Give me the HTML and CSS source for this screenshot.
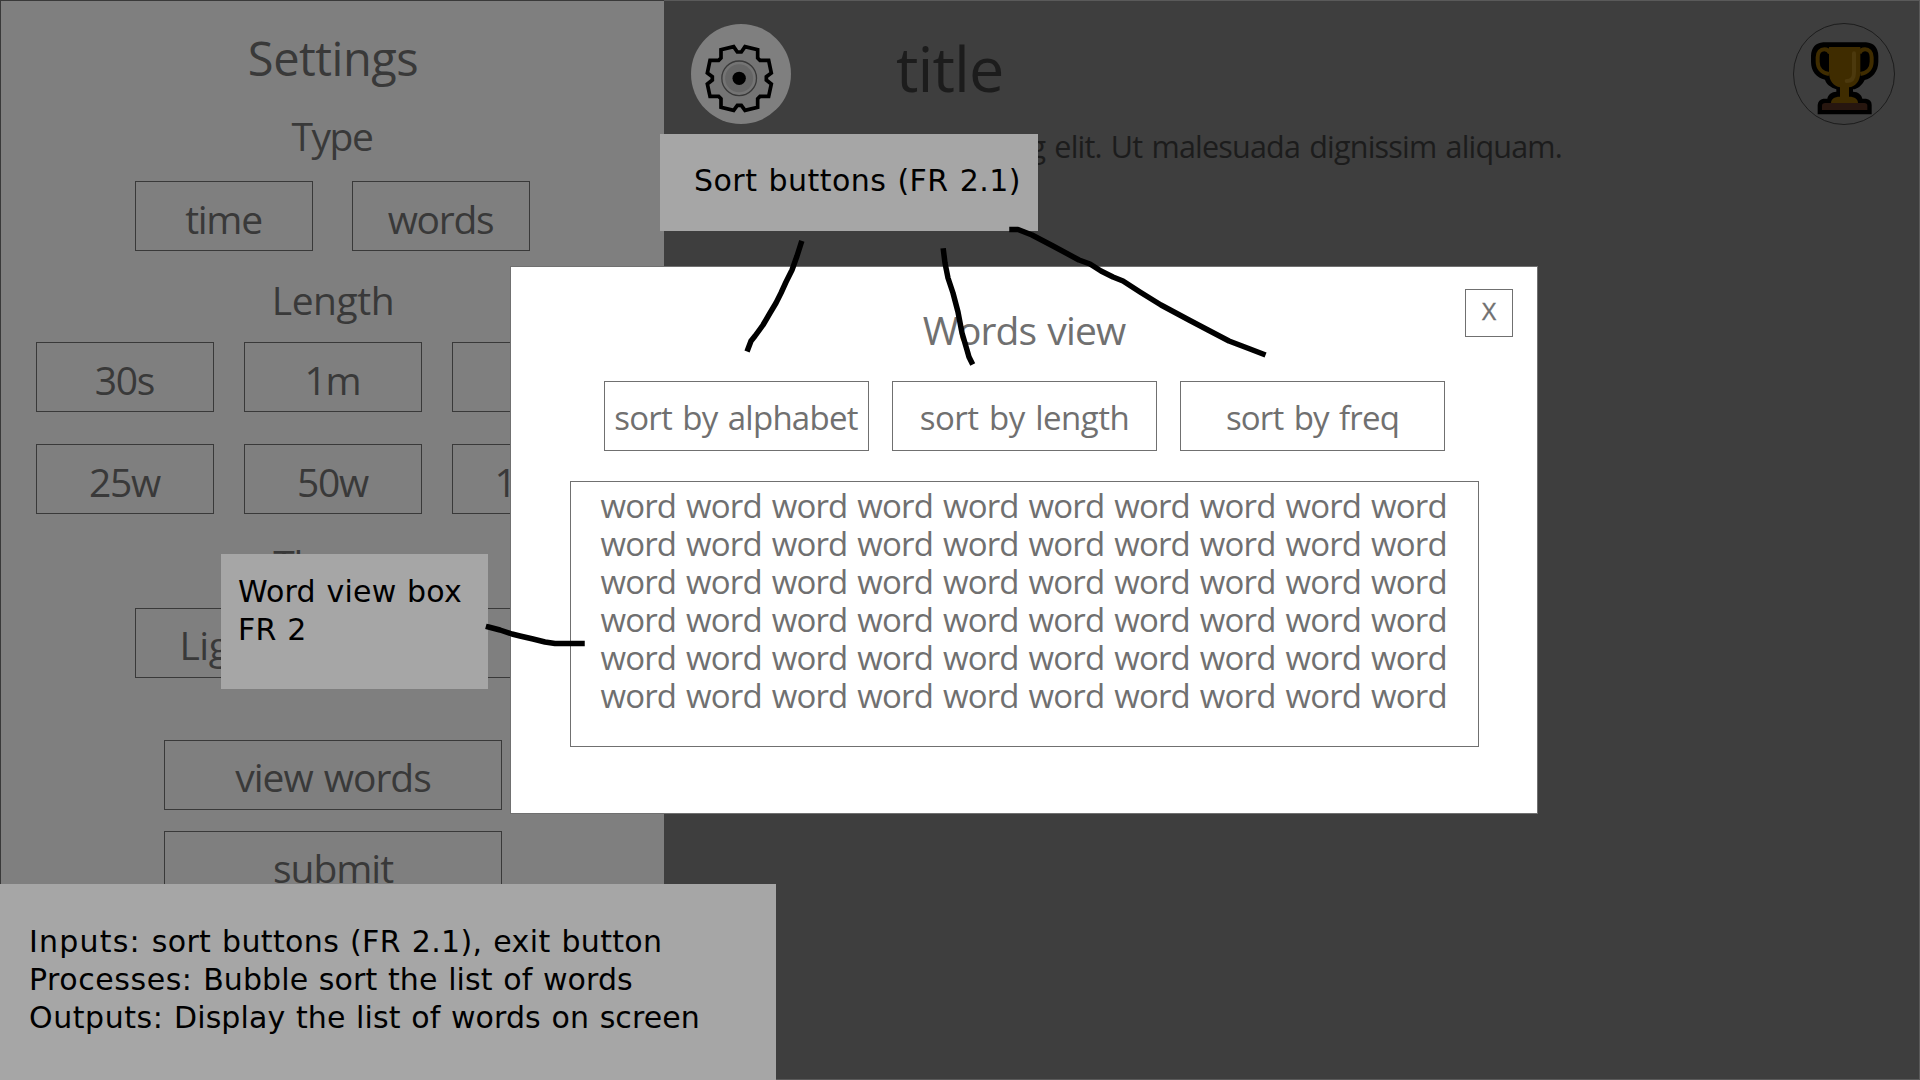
FILE: index.html
```html
<!DOCTYPE html>
<html lang="en">
<head>
<meta charset="utf-8">
<title>Words view</title>
<link rel="stylesheet" href="styles.css">
</head>
<body>
<div class="screen">
  <aside class="sidebar">
    <h1 class="sidebar-title">Settings</h1>
    <h2 class="group-title type-title">Type</h2>
    <div class="row type-row">
      <button class="btn tight">time</button>
      <button class="btn tight">words</button>
    </div>
    <h2 class="group-title length-title">Length</h2>
    <div class="row time-row">
      <button class="btn tight">30s</button>
      <button class="btn tight">1m</button>
      <button class="btn tight">2m</button>
    </div>
    <div class="row word-row">
      <button class="btn tight">25w</button>
      <button class="btn tight">50w</button>
      <button class="btn tight">100w</button>
    </div>
    <h2 class="group-title theme-title">Theme</h2>
    <div class="row theme-row">
      <button class="btn light">Light</button>
      <button class="btn tight">Dark</button>
    </div>
    <button class="btn wide view-words">view words</button>
    <button class="btn wide submit">submit</button>
  </aside>

  <main class="main">
    <header class="header">
      <div class="gear-button">
        <svg viewBox="33 30 300 300" width="100" height="100">
          <path class="gear-body" d="M172 114H184L195 98 233 107V132L240 139H266L274 177 259 188V198L274 210 266 247H240L233 254V280L195 289 184 274H172L161 289 123 280V254L116 247H90L82 210 97 198V188L82 177 90 139H116L123 132V107L161 98Z"/>
          <circle class="gear-ring" cx="177.500" cy="193" r="52"/>
          <circle class="gear-hub" cx="177.500" cy="193" r="42"/>
          <circle class="gear-dot" cx="177.500" cy="193" r="20"/>
        </svg>
      </div>
      <div class="title">title</div>
      <div class="trophy-button">
        <svg viewBox="99 69 306 306" width="102" height="102">
          <circle class="trophy-ring" cx="252" cy="222" r="151.500"/>
          <path d="M190 127H318Q353 130 355 167V185C355 215 335 236 314 240C306 256 292 268 279 268V275C295 275 305 285 307 296H318Q335 298 335 315V343H173V315Q175 298 190 296H202C204 284 215 275 229 275V268C212 262 198 252 195 239C170 233 153 215 153 185V167Q155 130 190 127Z"/>
          <path class="handle" d="M207 222C184 218 173 203 173 185V172C173 156 182 148 193 148C203 148 208 155 210 160M301 222C324 218 335 203 335 185V172C335 156 326 148 315 148C305 148 300 155 298 160"/>
          <path class="gold" d="M207 141H301V215C301 245 285 260 267 262V290C285 290 294 298 294 309H213C213 298 222 290 240 290V262C222 258 207 245 207 215Z"/>
          <path class="shine" d="M282 160V218Q282 243 260 243"/>
          <path class="plinth" d="M186 330V317Q186 309 196 309H313Q322 309 322 317V330Z"/>
        </svg>
      </div>
    </header>
    <p class="passage">consectetur adipiscing elit. Ut malesuada dignissim aliquam.</p>
  </main>

  <section class="modal">
    <button class="close">X</button>
    <h2 class="modal-title">Words view</h2>
    <div class="sort-row">
      <button class="sort alphabet">sort by alphabet</button>
      <button class="sort length">sort by length</button>
      <button class="sort freq">sort by freq</button>
    </div>
    <div class="word-box">word word word word word word word word word word
word word word word word word word word word word
word word word word word word word word word word
word word word word word word word word word word
word word word word word word word word word word
word word word word word word word word word word</div>
  </section>

  <div class="note note-sort">Sort buttons (FR 2.1)</div>
  <div class="note note-box">Word view box<br>FR 2</div>
  <div class="note note-io"><span class="inputs"><span class="inputs-label">Inputs:</span> sort buttons (FR 2.1), exit button</span><br><span class="label">Processes:</span> Bubble sort the list of words<br><span class="label">Outputs:</span> Display the list of words on screen</div>

  <svg class="pointers" viewBox="0 0 1920 1080" width="1920" height="1080">
    <path d="M801 243.500L797 256 792 270 786 282 781 293 776 303 770 313 763 325 755 336 751 341 748 349"/>
    <path d="M943.500 251L945 263 948 278 953 293 958 312 962 333 967 350 969 357 971.500 362"/>
    <path d="M1012 229.500H1018L1032 235 1053 246 1079 260 1090 264 1101 271 1113 277 1123 281 1140 292 1161 305 1189 320 1208 330 1229 341 1250 349 1263 354"/>
    <path d="M488.500 627L500 630 512 634 520 636 533 639 545 642 555 643.500H582"/>
  </svg>
</div>
</body>
</html>
```
FILE: styles.css
```css
* { box-sizing: border-box; }

body {
  margin: 0;
  font-family: "Open Sans", "Noto Sans", sans-serif;
}

h1, h2, p { margin: 0; font-weight: 400; }

button {
  padding: 0;
  background: transparent;
  color: inherit;
  font: inherit;
  letter-spacing: inherit;
  word-spacing: inherit;
}

svg { display: block; }

.screen {
  position: relative;
  display: grid;
  grid-template-columns: 664px 1fr;
  width: 1920px;
  height: 1080px;
  overflow: hidden;
}

/* settings panel */
.sidebar {
  display: flex;
  flex-direction: column;
  align-items: center;
  padding: 27px 0 0 1px;
  border: 1px solid #393939;
  border-right: 0;
  background: #7f7f7f;
  color: #393939;
  font-size: 39px;
  letter-spacing: -1px;
  word-spacing: 2px;
}

.sidebar-title {
  font-size: 47px;
  line-height: 60px;
  letter-spacing: -0.5px;
}

.group-title { font-size: 39px; line-height: 50px; }
.type-title { margin: 23px 2px 0 0; letter-spacing: -1.4px; }
.length-title { margin-top: 24px; letter-spacing: -0.45px; }
.theme-title { margin-top: 25px; letter-spacing: -1.2px; }

.row { display: flex; }
.type-row { margin: 20px 1px 0 0; gap: 39px; }
.time-row { margin-top: 17px; gap: 30px; }
.word-row { margin-top: 32px; gap: 30px; }
.theme-row { margin: 19px 1px 0 0; gap: 39px; }

.btn {
  width: 178px;
  height: 70px;
  padding-top: 4px;
  border: 1px solid #393939;
  line-height: 50px;
}

.tight { padding: 5px 1px 0 0; letter-spacing: -1.3px; }
.light { padding-right: 2px; letter-spacing: -0.4px; }
.wide { flex: none; width: 338px; }
.view-words { margin-top: 62px; }
.submit { margin-top: 21px; }

/* typing area */
.main {
  border: 1px solid #5a5a5a;
  border-left: 0;
  background: #3e3e3e;
  color: #1c1c1c;
}

.header {
  display: flex;
  align-items: flex-start;
  height: 124px;
  padding: 22px 24px 0 27px;
}

.gear-button {
  margin-top: 1px;
  border-radius: 50%;
  background: #7f7f7f;
}

.gear-body { fill: #747474; stroke: #000; stroke-width: 11; }
.gear-ring { fill: #747474; stroke: #393939; stroke-width: 4; }
.gear-hub { fill: #666; }
.gear-dot { fill: #000; }

.title {
  margin: 5px 0 0 105px;
  font-size: 63px;
  line-height: 80px;
  letter-spacing: -0.9px;
}

.trophy-button { margin-left: auto; }
.trophy-ring { fill: none; stroke: #1c1c1c; stroke-width: 3; }
.handle { fill: none; stroke: #3f2c00; stroke-width: 12; }
.gold { fill: #3f2c00; }
.shine { fill: none; stroke: #4c390d; stroke-width: 12; stroke-linecap: round; }
.plinth { fill: #27160f; }

.passage {
  padding: 1px 357px 0 0;
  font-size: 30.5px;
  line-height: 40px;
  letter-spacing: -0.8px;
  word-spacing: 2px;
  text-align: right;
  white-space: nowrap;
}

/* words dialog */
.modal {
  position: absolute;
  left: 510px;
  top: 266px;
  display: flex;
  flex-direction: column;
  align-items: center;
  width: 1028px;
  height: 548px;
  padding-top: 38px;
  border: 1px solid #707070;
  background: #fff;
  color: #707070;
}

.modal-title {
  font-size: 39px;
  line-height: 50px;
  letter-spacing: -0.9px;
  word-spacing: 2px;
}

.close {
  position: absolute;
  top: 22px;
  right: 24px;
  width: 48px;
  height: 48px;
  padding-bottom: 5px;
  border: 1px solid #707070;
  font-size: 24.5px;
  -webkit-text-stroke: 0.4px #707070;
}

.sort-row {
  display: flex;
  gap: 23px;
  margin-top: 26px;
  word-spacing: 2.4px;
}

.sort {
  width: 265px;
  height: 70px;
  padding-top: 4px;
  border: 1px solid #707070;
  font-size: 33px;
  line-height: 50px;
}

.alphabet { letter-spacing: -0.75px; }
.length { padding-left: 1px; letter-spacing: -0.5px; }
.freq { padding-left: 1px; letter-spacing: -0.8px; }

.word-box {
  width: 909px;
  height: 266px;
  margin-top: 30px;
  padding: 5px 0 0 30px;
  border: 1px solid #707070;
  font-size: 33px;
  line-height: 38px;
  letter-spacing: -0.85px;
  word-spacing: 2.2px;
  white-space: pre;
}

/* annotations */
.note {
  position: absolute;
  background: #a6a6a6;
  color: #000;
  font-family: "DejaVu Sans", sans-serif;
  font-size: 30px;
  line-height: 38px;
  letter-spacing: 0.18px;
  word-spacing: 1px;
  white-space: nowrap;
}

.note-sort {
  left: 660px;
  top: 134px;
  width: 378px;
  height: 97px;
  padding: 28px 0 0 34px;
  letter-spacing: 0.48px;
}

.note-box {
  left: 221px;
  top: 554px;
  width: 267px;
  height: 135px;
  padding: 19px 0 0 17px;
}

.note-io {
  left: 0;
  top: 884px;
  width: 776px;
  height: 196px;
  padding: 39px 0 0 29px;
  letter-spacing: 0.1px;
}

.inputs { letter-spacing: 0.35px; }
.inputs-label { letter-spacing: 1.2px; }
.label { letter-spacing: 0.55px; }

.pointers {
  position: absolute;
  left: 0;
  top: 0;
  fill: none;
  stroke: #000;
  stroke-width: 5.5px;
  stroke-linecap: square;
  stroke-linejoin: round;
}
```
